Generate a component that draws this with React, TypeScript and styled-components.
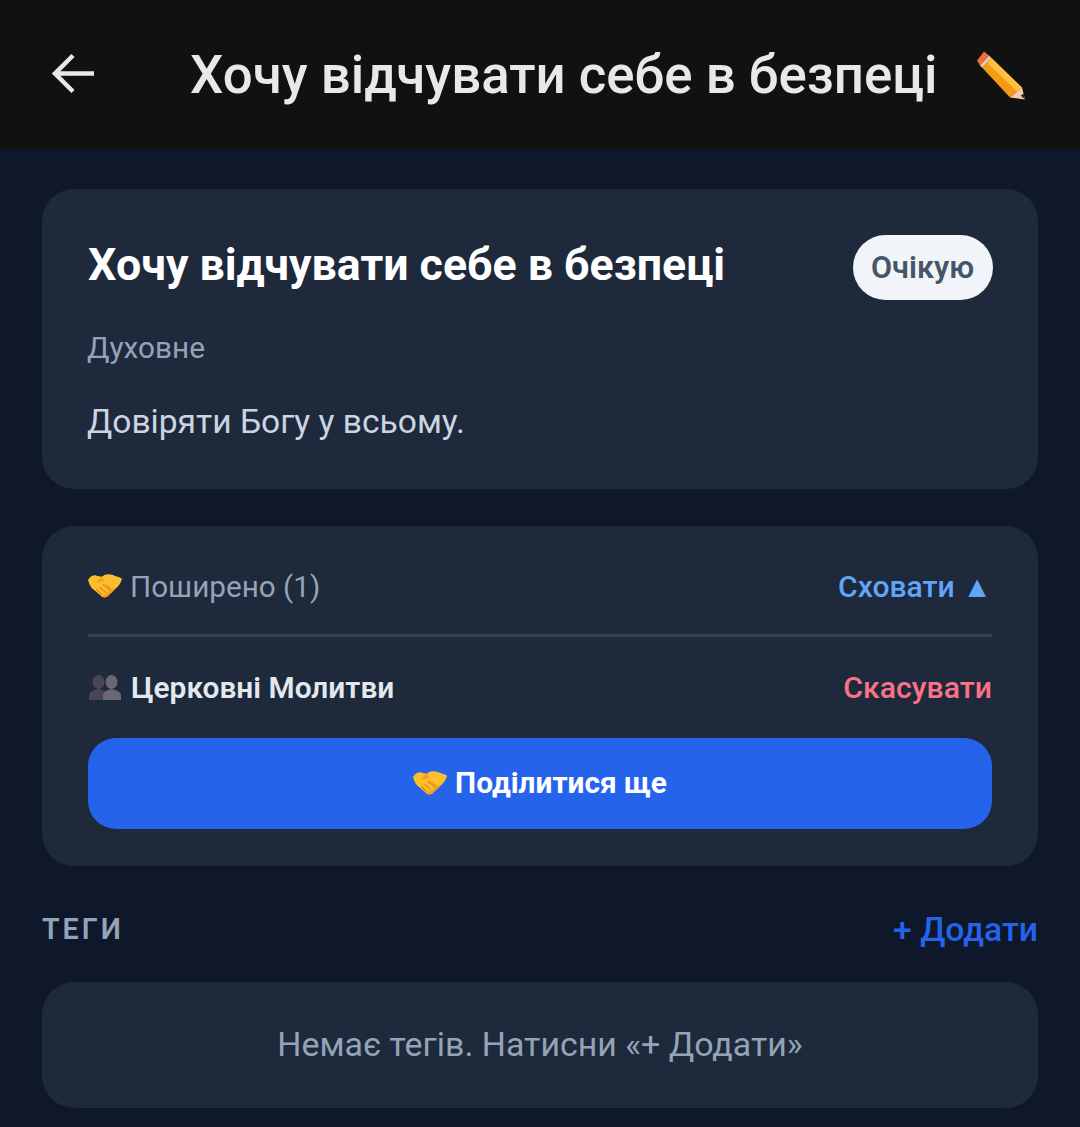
import React from "react";
import styled, { createGlobalStyle } from "styled-components";

const GlobalStyle = createGlobalStyle`
  html, body { margin: 0; padding: 0; background: #0f172a; }
  body { font-family: Roboto, "Noto Sans", sans-serif; overflow: hidden; }
`;

const Page = styled.div`
  width: 1080px;
  height: 1127px;
  overflow: hidden;
  background: #0f172a;
`;

const Header = styled.header`
  height: 149px;
  background: #111111;
  display: flex;
  align-items: center;
  padding: 0 52px;
  box-sizing: border-box;
`;

const BackIcon = styled.svg`
  width: 44px;
  height: 44px;
  flex: none;
  margin-right: 94px;
`;

const HeaderTitle = styled.h1`
  margin: 0;
  flex: 1;
  font-size: 52.8px;
  font-weight: 500;
  color: #e8e8e8;
  white-space: nowrap;
`;

const PencilIcon = styled.svg`
  width: 54px;
  height: 54px;
  flex: none;
`;

const Content = styled.main`
  padding: 40px 42px 0;
  display: flex;
  flex-direction: column;
  gap: 37px;
`;

const Card = styled.section`
  background: #1e293b;
  border-radius: 32px;
  padding: 46px 46px 47px;
`;

const ShareCard = styled(Card)`
  padding: 42px 46px 37px;
`;

const TopRow = styled.div`
  display: flex;
  justify-content: space-between;
  align-items: center;
  margin-right: -1px;
`;

const Title = styled.h2`
  margin: 0;
  padding-bottom: 5px;
  font-size: 44.7px;
  font-weight: 700;
  color: #ffffff;
`;

const Badge = styled.span`
  height: 65px;
  display: flex;
  align-items: center;
  background: #f1f5f9;
  color: #475569;
  font-size: 30.6px;
  font-weight: 600;
  padding: 0 19px 0 18px;
  border-radius: 33px;
`;

const Category = styled.div`
  margin: 30px 0 0 -1px;
  font-size: 29.8px;
  line-height: 36px;
  color: #94a3b8;
`;

const Description = styled.p`
  margin: 36px 0 0 -1px;
  font-size: 33.6px;
  line-height: 40px;
  color: #cbd5e1;
`;

const Row = styled.div`
  display: flex;
  justify-content: space-between;
  align-items: center;
  height: 36px;
`;

const RowLabel = styled.span`
  display: flex;
  align-items: center;
  gap: 9px;
`;

const SharedLabel = styled(RowLabel)`
  gap: 8px;
  font-size: 29.7px;
  color: #94a3b8;
`;

const Toggle = styled.span`
  font-size: 30.1px;
  font-weight: 500;
  color: #60a5fa;
`;

const Divider = styled.hr`
  border: 0;
  height: 3px;
  background: #334155;
  margin: 30px 0 32px;
`;

const GroupName = styled(RowLabel)`
  font-size: 29.9px;
  font-weight: 600;
  color: #e2e8f0;
`;

const PeopleIcon = styled.svg`
  width: 34px;
  height: 26px;
  flex: none;
`;

const HandshakeIcon = styled.svg`
  width: 34px;
  height: 24px;
  flex: none;
`;

const Cancel = styled.span`
  font-size: 30.2px;
  font-weight: 500;
  color: #fb7185;
`;

const ShareButton = styled.button`
  width: 100%;
  height: 91px;
  margin-top: 33px;
  padding: 0 0 2px;
  border: 0;
  border-radius: 28px;
  background: #2563eb;
  color: #fff;
  font: 700 29.8px Roboto, sans-serif;
  display: flex;
  align-items: center;
  justify-content: center;
  gap: 8px;
`;

const SectionHead = styled.div`
  display: flex;
  justify-content: space-between;
  align-items: center;
  height: 32px;
  margin-top: 10px;
`;

const SectionLabel = styled.span`
  font-size: 28.6px;
  font-weight: 600;
  letter-spacing: 3px;
  color: #94a3b8;
`;

const AddLink = styled.span`
  font-size: 33.7px;
  font-weight: 500;
  color: #2563eb;
`;

const EmptyCard = styled.section`
  background: #1e293b;
  border-radius: 32px;
  height: 126px;
  padding-bottom: 2px;
  box-sizing: border-box;
  display: flex;
  align-items: center;
  justify-content: center;
  font-size: 33.9px;
  color: #94a3b8;
`;

function Handshake() {
  return (
    <HandshakeIcon viewBox="1 1 32 21.500">
      <path
        d="M1 6C3 3 6 1 9 2l5 1c3-3 8-3 12-1 3 1 5 1 7 3-1 4-3 7-6 9l-7 7c-2 2-5 2-7 0l-8-7C3 12 2 9 1 6z"
        fill="#fbbf2d"
      />
      <path
        d="M14 3c-2 1-4 3-5 5 2 1 4 0 6-1l8 7 4 0-7 7c-2 2-5 2-7 0 3 0 6-2 8-5z"
        fill="#f59e1b"
      />
      <path d="M12 13l6 5M15 10l6 5M9 15l5 5" stroke="#e08a12" strokeWidth="1.2" fill="none" />
    </HandshakeIcon>
  );
}

function People() {
  return (
    <PeopleIcon viewBox="0 0 34 26">
      <g fill="#4a4556">
        <ellipse cx="10.500" cy="8" rx="6" ry="7" />
        <path d="M1 26v-4c0-4 4-6 9.500-7 5 1 8.500 3 8.500 7v4z" />
      </g>
      <g fill="#6b6674">
        <ellipse cx="23.500" cy="8" rx="6" ry="7" />
        <path d="M15 26v-4c0-4 3-6 8.500-7 5.500 1 9.500 3 9.500 7v4z" />
      </g>
    </PeopleIcon>
  );
}

function Pencil() {
  return (
    <PencilIcon viewBox="0 0 54 54">
      <path d="M3 12.500 10 3.500 15 7.500 6 17.500z" fill="#e8703a" />
      <path d="M6 17.500 15 7.500 17.500 10 8.500 20z" fill="#f2c6a0" />
      <path d="M8.500 20 17.500 10 48 39.500 36 49.500z" fill="#f59a16" />
      <path d="M13.500 15 17.500 10 48 39.500 43 43.500z" fill="#fcc23f" />
      <path d="M36 49.500 48 39.500 51 51.500z" fill="#f4cfa8" />
      <path d="M46.500 47.500 49.800 45.500 51 51.500z" fill="#3a2a20" />
    </PencilIcon>
  );
}

export default function App() {
  return (
    <Page>
      <GlobalStyle />
      <Header>
        <BackIcon viewBox="0 0 44 44" fill="none" stroke="#e8e8e8" strokeWidth="4.5">
          <path d="M42 20.500H4M21 2.500 3 20.500l18 18" />
        </BackIcon>
        <HeaderTitle>Хочу відчувати себе в безпеці</HeaderTitle>
        <Pencil />
      </Header>
      <Content>
        <Card>
          <TopRow>
            <Title>Хочу відчувати себе в безпеці</Title>
            <Badge>Очікую</Badge>
          </TopRow>
          <Category>Духовне</Category>
          <Description>Довіряти Богу у всьому.</Description>
        </Card>
        <ShareCard>
          <Row>
            <SharedLabel>
              <Handshake />
              Поширено (1)
            </SharedLabel>
            <Toggle>Сховати ▲</Toggle>
          </Row>
          <Divider />
          <Row>
            <GroupName>
              <People />
              Церковні Молитви
            </GroupName>
            <Cancel>Скасувати</Cancel>
          </Row>
          <ShareButton>
            <Handshake />
            Поділитися ще
          </ShareButton>
        </ShareCard>
        <SectionHead>
          <SectionLabel>ТЕГИ</SectionLabel>
          <AddLink>+ Додати</AddLink>
        </SectionHead>
        <EmptyCard>Немає тегів. Натисни «+ Додати»</EmptyCard>
      </Content>
    </Page>
  );
}
